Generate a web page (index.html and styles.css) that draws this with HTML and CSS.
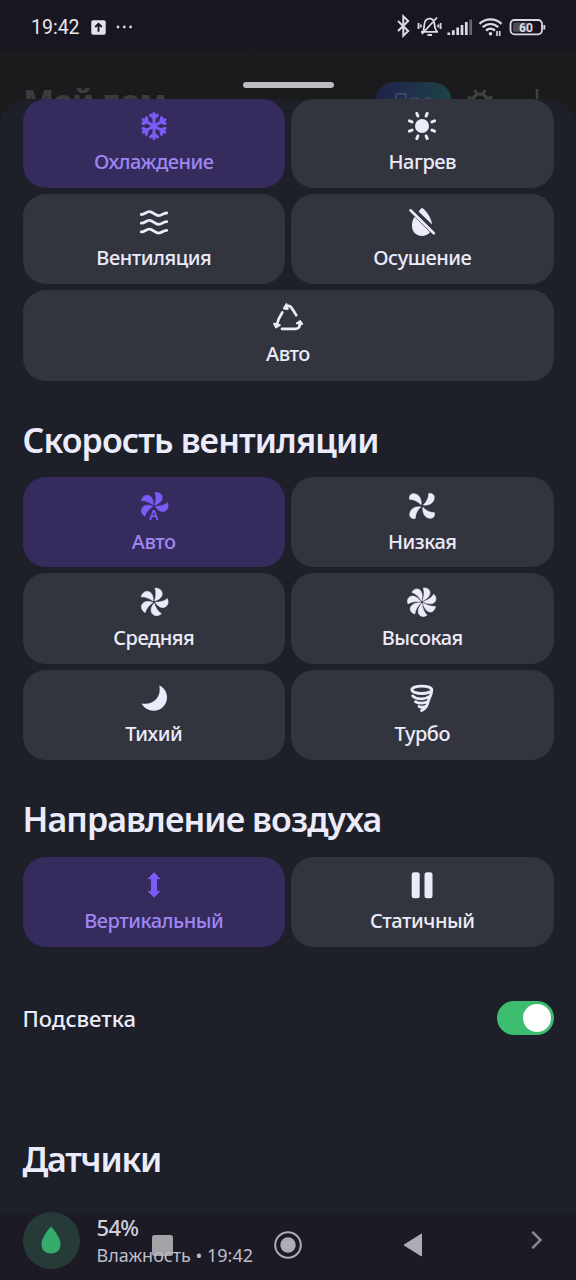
FILE: index.html
```
<!DOCTYPE html>
<html lang="ru">
<head>
<meta charset="utf-8">
<title>Кондиционер</title>
<link rel="stylesheet" href="styles.css">
</head>
<body>
<svg class="defs" width="0" height="0">
  <defs>
    <path id="blade4" d="M6.800-12.500C10.500-13 12.800-11 12.200-7.500C11.500-2.600 6.500-.3 1.300-.9C4.500-4 6.600-7.500 6.800-12.500Z"/>
    <path id="blade5" d="M1-13.800C5.500-14 8.300-11.500 8.200-8C8-4.500 4.700-2 .6-1.200C2-5 2.500-9.500 1-13.800Z"/>
    <path id="blade7" d="M1.300-14C5.500-14.500 8.300-12 8-8.800C7.600-5.300 4-2.500 .6-1.200C2-5 2.800-9.500 1.300-14Z"/>
    <path id="arm" d="M0 0V-12.600M-3.400-10.800L0-7.800L3.400-10.800"/>
  </defs>
</svg>
<div class="screen">
  <header class="status">
    <span class="clock">19:42</span>
    <svg class="upload" width="15" height="15" viewBox="0 0 16 16"><rect x=".3" y=".3" width="15.400" height="15.400" rx="2" fill="#e4e4e8"/><path d="M8 12.500V4.500M4.500 7.500L8 4L11.500 7.500" fill="none" stroke="#181620" stroke-width="2"/></svg>
    <svg class="dots" width="17" height="4" viewBox="0 0 17 4" fill="#d8d8dc"><circle cx="2" cy="2" r="1.400"/><circle cx="8.300" cy="2" r="1.400"/><circle cx="14.600" cy="2" r="1.400"/></svg>
    <svg class="tray" width="156" height="24" viewBox="0 0 156 24" fill="none" stroke="#dcdce0" stroke-width="1.800">
      <path d="M7 7L17.200 17L12.300 21.700V2.300L17.200 7L7 17" stroke-width="2"/>
      <path d="M30 17.800H47M32.300 17C33.500 14 32.500 9 34.700 6.300C37.300 3.500 42 4 43.200 8.500C43.800 12 43.500 15 46 17.800M36.500 21H41M46 3.500L31 20M27.500 9V15M29.800 10.500V13.500M49.600 9V15M47.300 10.500V13.500"/>
      <g stroke-width="2.700"><path d="M57.800 21V18.400M62.300 21V16.200M66.700 21V13.500M71 21V11M75.300 21V8"/><path d="M79.700 21V5.500" stroke="#66656d"/></g>
      <path d="M88.500 9.800C94.500 4 104.500 4 110.500 9.800M91.700 13.200C96.500 9 102.500 9 107.300 13.200M95 16.500C98 14 101 14 104 16.500" stroke-width="2.300"/>
      <circle cx="99.500" cy="19.800" r="1.800" fill="#dcdce0" stroke="none"/>
      <path d="M106 17V22M108.700 17V22" stroke-width="1.600"/>
      <rect x="119.500" y="6" width="31.500" height="14.300" rx="4"/>
      <rect x="122" y="8.500" width="15" height="9.300" rx="1.500" fill="#4c4b52" stroke="none"/>
      <path d="M153.300 11V15.500" stroke-width="1.900"/>
      <text class="battery" x="135" y="17.500" text-anchor="middle">60</text>
    </svg>
  </header>
  <div class="behind">
    <span class="home">Мой дом <svg width="20" height="12" viewBox="0 0 20 12" fill="none" stroke="#3b3b3e" stroke-width="3"><path d="M3 2L10 9L17 2"/></svg></span>
    <span class="pro">Про</span>
    <svg class="gear" width="28" height="28" viewBox="-14 -14 28 28" fill="none" stroke="#414144" stroke-width="3"><circle r="8"/><path d="M0-9V-13M0 9V13M-9 0H-13M9 0H13M-6.400-6.400L-9.500-9.500M6.400-6.400L9.500-9.500M-6.400 6.400L-9.500 9.500M6.400 6.400L9.500 9.500" transform="rotate(22)"/></svg>
    <svg class="plus" width="24" height="24" viewBox="0 0 24 24" stroke="#414144" stroke-width="2.500"><path d="M12 0V24M0 12H24"/></svg>
    <span class="handle"></span>
  </div>
  <main class="sheet">
    <section class="grid modes">
      <div class="card active"><svg class="icon" viewBox="-16 -16 32 32" fill="none" stroke="currentColor" stroke-width="3" stroke-linecap="round"><use href="#arm"/><use href="#arm" transform="rotate(60)"/><use href="#arm" transform="rotate(120)"/><use href="#arm" transform="rotate(180)"/><use href="#arm" transform="rotate(240)"/><use href="#arm" transform="rotate(300)"/></svg><span class="label">Охлаждение</span></div>
      <div class="card"><svg class="icon" viewBox="-16 -16 32 32"><circle r="7" fill="currentColor"/><path transform="rotate(22.500)" d="M0-10.800V-13.600M0 10.800V13.600M-10.800 0H-13.600M10.800 0H13.600M-7.640-7.640L-9.620-9.620M7.640-7.640L9.620-9.620M-7.640 7.640L-9.620 9.620M7.640 7.640L9.620 9.620" stroke="currentColor" stroke-width="3" stroke-linecap="round"/></svg><span class="label">Нагрев</span></div>
      <div class="card"><svg class="icon" viewBox="-16 -16 32 32" fill="none" stroke="currentColor" stroke-width="2.800" stroke-linecap="round"><path id="wave" d="M-12.700-7.500C-9-7.500-8-10.300-4.700-10.300C-1 -10.300 1-6.300 4.700-6.300C8-6.300 9-9 12.700-9"/><use href="#wave" y="8.700"/><use href="#wave" y="17.400"/></svg><span class="label">Вентиляция</span></div>
      <div class="card"><svg class="icon" viewBox="-16 -16 32 32" fill="currentColor"><path d="M0-14.300C-1.200-13.400-2.400-12-3.400-10.500L10 2.500C9.500-4 5-10.500 0-14.300Z"/><path d="M-7.400-5.300C-9-2.200-10-1-10 4C-10 9.800-5.500 14-.2 14C3 14 6 12.700 8 10.200Z"/><path d="M-11.500-11.700L11.800 11.300" stroke="currentColor" stroke-width="2.600" stroke-linecap="round"/></svg><span class="label">Осушение</span></div>
      <div class="card wide"><svg class="icon" viewBox="-16 -16 32 32" fill="none" stroke="currentColor" stroke-width="2.700" stroke-linecap="round" stroke-linejoin="round"><path d="M-5.700-5.500C-8-2-9.800 1.500-11 6M-6 10.800H7.500C10.800 10.800 12.300 8.500 11.700 5M-1-11.500C1-12.800 2.800-11.500 4-9.500L8.300-2.800"/><path d="M-14 5.500L-8 7L-12 9.500ZM8.800 5.300L12.200 3L14.300 6ZM-1.500-14L-.2-8.800L-4.200-9.500Z" fill="currentColor" stroke-width="1.800"/></svg><span class="label">Авто</span></div>
    </section>
    <h2 class="title speed">Скорость вентиляции</h2>
    <section class="grid">
      <div class="card active"><svg class="icon fan" viewBox="-16 -16 32 32"><use href="#blade5"/><use href="#blade5" transform="rotate(72)"/><use href="#blade5" transform="rotate(218)"/><use href="#blade5" transform="rotate(289)"/><text class="auto-letter" x="-.3" y="13.500" text-anchor="middle">A</text></svg><span class="label">Авто</span></div>
      <div class="card"><svg class="icon fan" viewBox="-16 -16 32 32"><use href="#blade4"/><use href="#blade4" transform="rotate(90)"/><use href="#blade4" transform="rotate(180)"/><use href="#blade4" transform="rotate(270)"/></svg><span class="label">Низкая</span></div>
      <div class="card"><svg class="icon fan" viewBox="-16 -16 32 32"><use href="#blade5"/><use href="#blade5" transform="rotate(72)"/><use href="#blade5" transform="rotate(144)"/><use href="#blade5" transform="rotate(216)"/><use href="#blade5" transform="rotate(288)"/></svg><span class="label">Средняя</span></div>
      <div class="card"><svg class="icon fan" viewBox="-16 -16 32 32"><use href="#blade7"/><use href="#blade7" transform="rotate(51.430)"/><use href="#blade7" transform="rotate(102.860)"/><use href="#blade7" transform="rotate(154.290)"/><use href="#blade7" transform="rotate(205.710)"/><use href="#blade7" transform="rotate(257.140)"/><use href="#blade7" transform="rotate(308.570)"/></svg><span class="label">Высокая</span></div>
      <div class="card"><svg class="icon" viewBox="-16 -16 32 32" fill="currentColor"><path d="M5.300-12.500C10-10.500 13-6 13-.8C13 6.500 7.200 12.700-.3 12.700C-5.500 12.700-10 9.800-12.500 5.500C-3 7.500 8 1 5.300-12.500Z"/></svg><span class="label">Тихий</span></div>
      <div class="card"><svg class="icon" viewBox="-16 -16 32 32" fill="none" stroke="currentColor" stroke-width="2.800" stroke-linecap="round"><ellipse cx="-.2" cy="-8.200" rx="10" ry="3.700"/><path d="M9.800-7.500C9.300-2 7.500-1 6.500 2.500C5.500 7.500 4 11-.5 12.600M-9.300-2C-5 1.800 3 1.800 8-2M-6.500 3.700C-3 5.700 3 5.700 6.500 3M-3 8.500C-1 9.500 2 9.300 4.500 8"/></svg><span class="label">Турбо</span></div>
    </section>
    <h2 class="title direction">Направление воздуха</h2>
    <section class="grid">
      <div class="card active"><svg class="icon" viewBox="-16 -16 32 32" fill="currentColor"><path d="M0-12.300L5.600-6.300H2.500V6.300H5.600L0 12.300L-5.600 6.300H-2.500V-6.300H-5.600Z" stroke="currentColor" stroke-linejoin="round"/></svg><span class="label">Вертикальный</span></div>
      <div class="card"><svg class="icon" viewBox="-16 -16 32 32" fill="currentColor"><rect x="-10.300" y="-12.800" width="8" height="26" rx="2.500"/><rect x="2.500" y="-12.800" width="8" height="26" rx="2.500"/></svg><span class="label">Статичный</span></div>
    </section>
    <div class="row"><span class="row-label">Подсветка</span><span class="switch"><span class="knob"></span></span></div>
    <h2 class="title sensors">Датчики</h2>
    <div class="sensor">
      <span class="badge"><svg width="20" height="28" viewBox="0 0 20 28"><path d="M10 .5C14 5 19.500 12 19.500 18.500C19.500 24 16 27.500 10 27.500C4 27.500.5 24 .5 18.500C.5 12 6 5 10 .5Z" fill="#35ac6b"/></svg></span>
      <span class="values"><span class="value">54%</span><span class="note">Влажность • 19:42</span></span>
      <svg class="chevron" width="12" height="18" viewBox="0 0 12 18" fill="none" stroke="#85848e" stroke-width="2.500" stroke-linecap="round"><path d="M2 1.500L9.500 9L2 16.500"/></svg>
    </div>
  </main>
  <nav class="nav">
    <svg width="21" height="21" viewBox="0 0 21 21"><rect width="21" height="21" rx="2.500" fill="#a3a2a6"/></svg>
    <svg width="28" height="28" viewBox="0 0 28 28"><circle cx="14" cy="14" r="12.800" fill="none" stroke="#aeadb3" stroke-width="2"/><circle cx="14" cy="14" r="7.700" fill="#aeadb3"/></svg>
    <svg width="20" height="24" viewBox="0 0 20 24"><path d="M1 12L18.500 1V23Z" fill="#adacb2" stroke="#adacb2" stroke-linejoin="round"/></svg>
  </nav>
</div>
</body>
</html>
```
FILE: styles.css
```
* { box-sizing: border-box; }
body { margin: 0; background: #1d2028; font-family: "Noto Sans", sans-serif; color: #ecebfb; }
svg { display: block; flex: none; }
.defs { position: absolute; }
.screen { position: relative; width: 576px; height: 1280px; overflow: hidden; display: flex; flex-direction: column; background: linear-gradient(#181620 0 48px, #1b1b1e 52px 120px, #1d2028 140px); }
.status { height: 50px; flex: none; display: flex; align-items: center; padding: 4px 29px 0 31px; }
.clock { font: 400 19.500px/24px Roboto, sans-serif; color: #e8e8ec; width: 60px; padding-top: 2px; }
.dots { margin-left: 10px; }
.tray { margin: -2px 0 0 auto; }
.battery { font: 700 12px Roboto, sans-serif; fill: #dcdce0; stroke: none; }
.behind { position: relative; height: 49px; flex: none; }
.home { position: absolute; left: 23px; top: 27px; font-weight: 700; font-size: 33px; line-height: 48px; letter-spacing: -1.300px; color: #3c3c3f; display: flex; align-items: center; gap: 6px; }
.home svg { margin-top: 6px; }
.pro { position: absolute; left: 375px; top: 32px; width: 77px; height: 40px; border-radius: 20px; background: linear-gradient(100deg, #22204d, #1c4546); color: #3c4763; font-size: 21px; line-height: 38px; text-align: center; }
.gear { position: absolute; left: 466px; top: 38px; }
.plus { position: absolute; left: 525px; top: 39px; }
.handle { position: absolute; left: 243px; top: 32px; width: 91px; height: 6px; border-radius: 3px; background: #bcbbc0; }
.sheet { position: relative; flex: 1; padding: 0 22.500px; border-radius: 28px 28px 0 0; background: #1d2028; }
.grid { display: grid; grid-template-columns: 1fr 1fr; gap: 6px; }
.card { height: 90.400px; padding-top: 12.500px; border-radius: 23px; background: #33353e; display: flex; flex-direction: column; align-items: center; }
.modes .card { height: 90.200px; padding-top: 12px; }
.modes .card:nth-child(-n+2) { height: 89.200px; padding-top: 11px; }
.card.active { background: #352b5d; color: #7c5cf8; }
.wide { grid-column: 1 / -1; }
.icon { width: 32px; height: 32px; }
.fan { fill: currentColor; stroke: currentColor; stroke-width: .6; stroke-linejoin: round; }
.auto-letter { font: 600 13.500px "Noto Sans", sans-serif; stroke: none; }
.label { font-size: 20px; font-weight: 500; line-height: 26px; margin-top: 7px; letter-spacing: -.480px; }
.active .label { color: #9f86f3; }
.title { margin: 34px 0 12.500px; font-size: 34px; font-weight: 600; line-height: 50px; white-space: nowrap; }
.speed { letter-spacing: -.900px; }
.direction { letter-spacing: -.900px; }
.row { display: flex; justify-content: space-between; align-items: center; height: 40px; margin-top: 50.500px; }
.row-label { font-size: 22px; font-weight: 500; }
.switch { width: 57px; height: 34px; border-radius: 17px; background: #3cbd70; display: flex; justify-content: flex-end; padding: 3px; }
.knob { width: 28px; height: 28px; border-radius: 50%; background: #fff; }
.sensors { margin: 96.500px 0 27.500px; letter-spacing: -1.250px; }
.sensor { display: flex; align-items: flex-start; position: relative; z-index: 1; }
.badge { width: 57px; height: 57px; border-radius: 50%; background: #263b38; display: flex; align-items: center; justify-content: center; }
.values { display: flex; flex-direction: column; margin: 1px 0 0 17px; color: #d0cfdd; }
.value { font-size: 22px; font-weight: 500; line-height: 28px; letter-spacing: -.700px; }
.note { font-size: 18px; line-height: 28px; color: #bebdca; }
.chevron { margin: 19px 11px 0 auto; }
.nav { position: absolute; left: 0; right: 0; bottom: 0; height: 67px; display: flex; align-items: center; padding: 0 153px 3px 152px; justify-content: space-between; background: #1c1b25; }
```
